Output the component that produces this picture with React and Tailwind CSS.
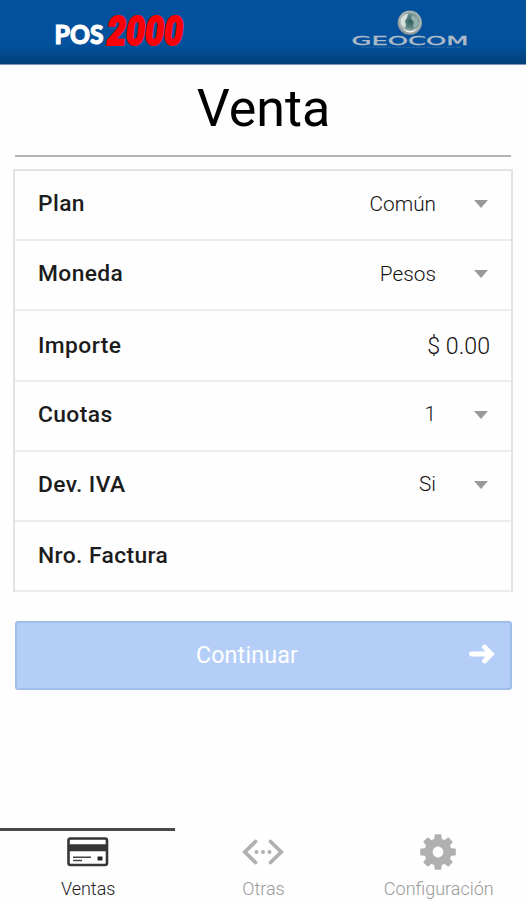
const rows = [
  { label: 'Plan', value: 'Común', select: true },
  { label: 'Moneda', value: 'Pesos', select: true },
  { label: 'Importe', value: '$ 0.00' },
  { label: 'Cuotas', value: '1', select: true },
  { label: 'Dev. IVA', value: 'Si', select: true },
  { label: 'Nro. Factura' },
]

function PosLogo() {
  return (
    <svg width="140" height="54" viewBox="50 2 140 54" className="block overflow-visible" role="img" aria-label="POS2000">
      <text x="54.5" y="43.7" textLength="49" lengthAdjust="spacingAndGlyphs" fill="#fff" stroke="#fff" strokeWidth="1" fontFamily="Lato, sans-serif" fontWeight="900" fontSize="26">POS</text>
      <text x="107" y="45" textLength="76" lengthAdjust="spacingAndGlyphs" fill="#fb0007" stroke="#fb0007" strokeWidth="2" fontFamily="Roboto, sans-serif" fontWeight="900" fontStyle="italic" fontSize="40">2000</text>
    </svg>
  )
}

function GeocomLogo() {
  return (
    <svg width="124" height="54" viewBox="348 2 124 54" className="block overflow-visible" role="img" aria-label="GEOCOM">
      <defs>
        <radialGradient id="globe" cx="0.52" cy="0.45" r="0.56">
          <stop offset="0" stopColor="#2f5c60" />
          <stop offset="0.45" stopColor="#5d8584" />
          <stop offset="0.75" stopColor="#a9b8b6" />
          <stop offset="1" stopColor="#77828a" />
        </radialGradient>
      </defs>
      <circle cx="409.8" cy="22.8" r="12.2" fill="url(#globe)" />
      <path d="M401 19c2-4 5-5 7-5l-1 4-2 3 1 4-1 3c-4-2-5-5-4-9z" fill="#e6eceb" opacity="0.85" />
      <path d="M412 15l5 3 1 6-3 4-2-2 1-4-3-3z" fill="#a3bdb8" opacity="0.8" />
      <path d="M403 28c4 4 10 4 14 0-2 5-10 7-14 0z" fill="#f2f4f4" />
      <text x="351.5" y="44.7" textLength="117" lengthAdjust="spacingAndGlyphs" fill="#aebac8" fontFamily="'DejaVu Sans', sans-serif" fontSize="11.5" stroke="#aebac8" strokeWidth="0.3">GEOCOM</text>
      <path d="M362 47.3h99" stroke="#6a8fb8" strokeWidth="0.8" strokeDasharray="3 1 5 1" opacity="0.45" />
    </svg>
  )
}

function CardIcon() {
  return (
    <svg width="42" height="30" viewBox="0 0 42 30" className="block">
      <rect x="1.5" y="1.5" width="38.5" height="26.5" rx="2" fill="#fff" stroke="#363636" strokeWidth="2.6" />
      <path d="M1.5 7.3h38.5v7H1.5z" fill="#363636" />
      <path d="M6 20.3h18M6 23.5h9" stroke="#444" strokeWidth="1.4" />
      <path d="M30.5 19.5h5v4h-5z" fill="#222" />
    </svg>
  )
}

function CodeIcon() {
  return (
    <svg width="42" height="26" viewBox="0 0 42 26" className="block" fill="none" stroke="#b0b0b0" strokeWidth="3.8" strokeLinecap="round">
      <path d="M13.5 2.5L2.8 13l10.7 10.5M28.5 2.5L39.2 13 28.5 23.5" strokeLinejoin="miter" />
      <g fill="#b0b0b0" stroke="none">
        <circle cx="14.5" cy="13" r="2" />
        <circle cx="21" cy="13" r="2" />
        <circle cx="27.5" cy="13" r="2" />
      </g>
    </svg>
  )
}

const teeth = [0, 45, 90, 135, 180, 225, 270, 315]

function GearIcon() {
  return (
    <svg width="36" height="36" viewBox="-18 -18 36 36" className="block">
      <g fill="#b0b0b0">
        {teeth.map(a => (
          <path key={a} d="M-4-12L-3.2-17.8H3.2L4-12z" transform={`rotate(${a})`} />
        ))}
        <circle r="13.6" />
      </g>
      <circle r="5.4" fill="#fff" />
    </svg>
  )
}

function Row({ label, value, select }) {
  return (
    <div className={`flex h-[70.2px] items-center border-b-2 border-[#ececec] pl-[23px] pr-[21px] ${select ? 'pb-0.5' : 'pb-px'}`}>
      <span className={`text-[22.8px] font-medium tracking-[0.4px] text-[#1c1c1c] ${select ? '' : 'pt-[2px]'}`}>{label}</span>
      {select ? (
        <>
          <span className="ml-auto mr-[38px] text-[20.8px] font-light text-[#111]">{value}</span>
          <svg width="14" height="8" viewBox="0 0 14 8" className="mr-0.5">
            <path d="M0 0h14L7 8z" fill="#999" />
          </svg>
        </>
      ) : (
        <span className="ml-auto pt-[3px] text-[23.2px] font-light text-[#111]">{value}</span>
      )}
    </div>
  )
}

const tabs = [
  { label: 'Ventas', icon: <CardIcon />, active: true },
  { label: 'Otras', icon: <CodeIcon /> },
  { label: 'Configuración', icon: <GearIcon /> },
]

export default function App() {
  return (
    <div className="flex h-[900px] w-[526px] flex-col overflow-hidden bg-[#fefefe] font-[Roboto,sans-serif]">
      <header className="flex h-[65px] shrink-0 justify-between border-b border-[#8291bb] bg-linear-to-b from-[#03519d] from-70% to-[#034078] pl-[50px] pr-[54px] pt-0.5">
        <PosLogo />
        <GeocomLogo />
      </header>

      <h1 className="mx-[15px] h-[92px] border-b-2 border-[#b3b3b3] pl-px pt-[14px] text-center text-[52px] leading-[60px] text-black">
        Venta
      </h1>

      <main className="mx-[13px] mt-3">
        <div className="border-2 border-b-0 border-[#e3e3e3]">
          {rows.map(row => <Row key={row.label} {...row} />)}
        </div>
        <button className="mx-0.5 mt-[29px] flex h-[69px] w-[497px] items-center rounded-[3px] border-2 border-[#9fbeea] bg-[#b5cef8] pr-[15px] text-white">
          <span className="flex-1 pl-2 text-center text-[23.2px] tracking-[0.2px]">Continuar</span>
          <svg width="26" height="20" viewBox="0 0 26 20" className="mb-1" fill="none" stroke="#fff" strokeWidth="4.8" strokeLinecap="round">
            <path d="M2.5 10H20M15.5 3l6.8 7-6.8 7" strokeLinejoin="miter" />
          </svg>
        </button>
      </main>

      <nav className="mt-auto grid h-[72px] shrink-0 grid-cols-3">
        {tabs.map(tab => (
          <div key={tab.label} className={`flex flex-col items-center border-t-3 ${tab.active ? 'border-[#4a4a4a] text-[#222]' : 'border-transparent text-[#999]'}`}>
            <div className="flex h-[42px] items-center">{tab.icon}</div>
            <span className="pl-px pt-1 text-[18px] font-light leading-6">{tab.label}</span>
          </div>
        ))}
      </nav>
    </div>
  )
}
